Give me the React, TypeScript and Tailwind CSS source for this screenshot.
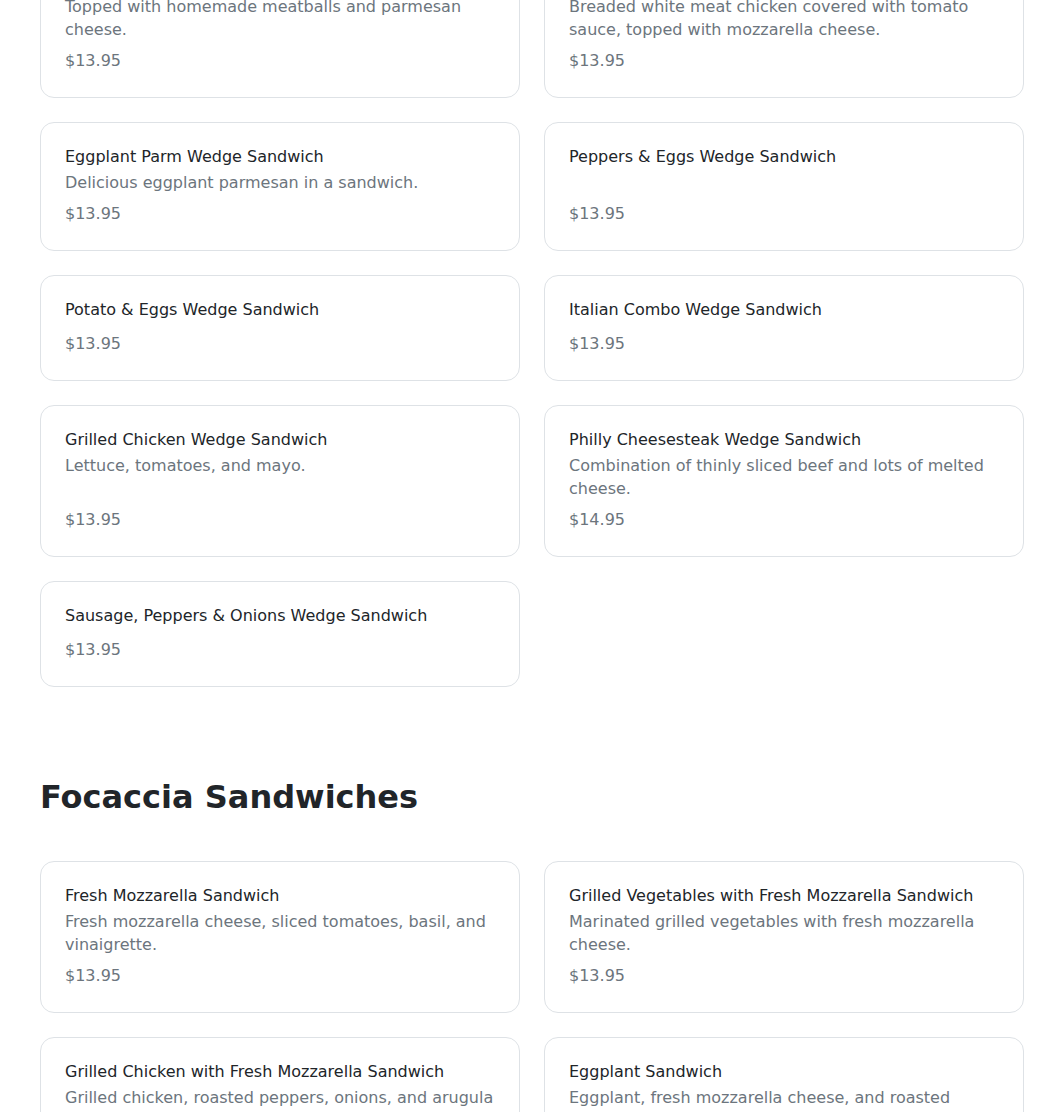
type MenuItem = {
  name: string
  description?: string
  price: string
}

const wedgeSandwiches: MenuItem[] = [
  { name: 'Meatball Parm Wedge Sandwich', description: 'Topped with homemade meatballs and parmesan cheese.', price: '$13.95' },
  { name: 'Chicken Parm Wedge Sandwich', description: 'Breaded white meat chicken covered with tomato sauce, topped with mozzarella cheese.', price: '$13.95' },
  { name: 'Eggplant Parm Wedge Sandwich', description: 'Delicious eggplant parmesan in a sandwich.', price: '$13.95' },
  { name: 'Peppers & Eggs Wedge Sandwich', price: '$13.95' },
  { name: 'Potato & Eggs Wedge Sandwich', price: '$13.95' },
  { name: 'Italian Combo Wedge Sandwich', price: '$13.95' },
  { name: 'Grilled Chicken Wedge Sandwich', description: 'Lettuce, tomatoes, and mayo.', price: '$13.95' },
  { name: 'Philly Cheesesteak Wedge Sandwich', description: 'Combination of thinly sliced beef and lots of melted cheese.', price: '$14.95' },
  { name: 'Sausage, Peppers & Onions Wedge Sandwich', price: '$13.95' },
]

const focacciaSandwiches: MenuItem[] = [
  { name: 'Fresh Mozzarella Sandwich', description: 'Fresh mozzarella cheese, sliced tomatoes, basil, and vinaigrette.', price: '$13.95' },
  { name: 'Grilled Vegetables with Fresh Mozzarella Sandwich', description: 'Marinated grilled vegetables with fresh mozzarella cheese.', price: '$13.95' },
  { name: 'Grilled Chicken with Fresh Mozzarella Sandwich', description: 'Grilled chicken, roasted peppers, onions, and arugula with balsamic.', price: '$14.95' },
  { name: 'Eggplant Sandwich', description: 'Eggplant, fresh mozzarella cheese, and roasted peppers.', price: '$13.95' },
]

function MenuCard({ item }: { item: MenuItem }) {
  return (
    <div className="flex flex-col rounded-[14px] border border-[#dee2e6] bg-white p-6">
      <h3 className="mb-1 text-base leading-5 text-[#212529]">{item.name}</h3>
      {item.description && <p className="text-base leading-[23px] text-[#6c757d]">{item.description}</p>}
      <p className="mt-auto pt-2 text-base leading-6 text-[#6c757d]">{item.price}</p>
    </div>
  )
}

function MenuGrid({ items }: { items: MenuItem[] }) {
  return (
    <div className="grid grid-cols-2 gap-6">
      {items.map(item => (
        <MenuCard key={item.name} item={item} />
      ))}
    </div>
  )
}

export default function App() {
  return (
    <div className="min-h-screen overflow-hidden bg-white font-['DejaVu_Sans',sans-serif]">
      <div className="-mt-[54px] w-[984px] ml-10 pb-10">
        <MenuGrid items={wedgeSandwiches} />
        <h2 className="mt-[91px] mb-[45px] text-[32px] font-bold leading-[38px] text-[#212529]">Focaccia Sandwiches</h2>
        <MenuGrid items={focacciaSandwiches} />
      </div>
    </div>
  )
}
